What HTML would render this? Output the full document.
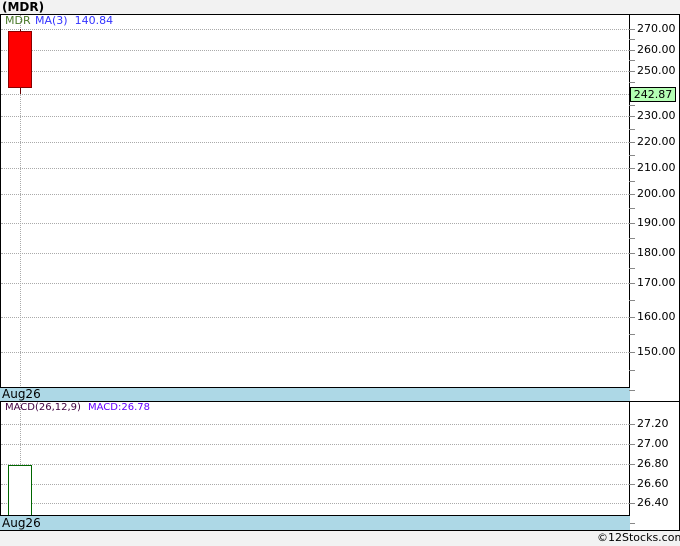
<!DOCTYPE html><html><head><style>
body{margin:0;width:680px;height:546px;background:#f2f2f2;position:relative;overflow:hidden;font-family:"DejaVu Sans","Liberation Sans",sans-serif;}
.a{position:absolute}
.t{font-size:11px;color:#000}
.g{position:absolute;left:1px;width:628px;height:0;border-top:1px dotted #aaa}
.tk{position:absolute;left:629px;width:6px;height:1px;background:#888}
.lb{position:absolute;left:637px;font-size:11px;color:#000}
</style></head><body>
<div class="a" style="left:2px;top:0px;font-weight:bold;font-size:12px">(MDR)</div>
<div class="a" style="left:0;top:14px;width:680px;height:516px;background:#fff;border-top:1px solid #000;box-sizing:border-box"></div>
<div class="a" style="left:0;top:14px;width:1px;height:516px;background:#000"></div>
<div class="a" style="left:629px;top:14px;width:1px;height:516px;background:#000"></div>
<div class="a" style="left:679px;top:14px;width:1px;height:516px;background:#000"></div>
<div class="a" style="left:20px;top:15px;height:501px;border-left:1px dotted #aaa"></div>
<div class="g" style="top:29px"></div><div class="g" style="top:50px"></div><div class="g" style="top:71px"></div><div class="g" style="top:94px"></div><div class="g" style="top:116px"></div><div class="g" style="top:142px"></div><div class="g" style="top:168px"></div><div class="g" style="top:194px"></div><div class="g" style="top:223px"></div><div class="g" style="top:253px"></div><div class="g" style="top:283px"></div><div class="g" style="top:317px"></div><div class="g" style="top:352px"></div>
<div class="tk" style="top:29px"></div><div class="tk" style="top:39px"></div><div class="tk" style="top:50px"></div><div class="tk" style="top:60px"></div><div class="tk" style="top:71px"></div><div class="tk" style="top:82px"></div><div class="tk" style="top:105px"></div><div class="tk" style="top:116px"></div><div class="tk" style="top:129px"></div><div class="tk" style="top:142px"></div><div class="tk" style="top:155px"></div><div class="tk" style="top:168px"></div><div class="tk" style="top:181px"></div><div class="tk" style="top:194px"></div><div class="tk" style="top:208px"></div><div class="tk" style="top:223px"></div><div class="tk" style="top:238px"></div><div class="tk" style="top:253px"></div><div class="tk" style="top:268px"></div><div class="tk" style="top:283px"></div><div class="tk" style="top:300px"></div><div class="tk" style="top:317px"></div><div class="tk" style="top:334px"></div><div class="tk" style="top:352px"></div><div class="tk" style="top:370px"></div>
<div class="lb" style="top:22px">270.00</div><div class="lb" style="top:43px">260.00</div><div class="lb" style="top:64px">250.00</div><div class="lb" style="top:109px">230.00</div><div class="lb" style="top:135px">220.00</div><div class="lb" style="top:161px">210.00</div><div class="lb" style="top:187px">200.00</div><div class="lb" style="top:216px">190.00</div><div class="lb" style="top:246px">180.00</div><div class="lb" style="top:276px">170.00</div><div class="lb" style="top:310px">160.00</div><div class="lb" style="top:345px">150.00</div>
<div class="a" style="left:630px;top:87px;width:46px;height:15px;background:#b3ffb3;border:1px solid #000;box-sizing:border-box;font-size:11px;line-height:13px;text-align:center">242.87</div>
<div class="a t" style="left:5px;top:14px;color:#4a7a2a">MDR</div>
<div class="a t" style="left:35px;top:14px;color:#3333ff">MA(3)&nbsp;&nbsp;140.84</div>
<div class="a" style="left:20px;top:29px;width:1px;height:65px;background:#600"></div>
<div class="a" style="left:8px;top:31px;width:24px;height:57px;background:#f00;border:1px solid #800;box-sizing:border-box"></div>
<div class="a" style="left:0;top:387px;width:630px;height:15px;background:#add8e6;border-top:1px solid #000;border-bottom:1px solid #000;box-sizing:border-box"></div>
<div class="a t" style="left:2px;top:387px;font-size:12px">Aug26</div>
<div class="a" style="left:630px;top:401px;width:50px;height:1px;background:#000"></div>
<div class="tk" style="top:390px"></div>
<div class="g" style="top:424px"></div><div class="g" style="top:444px"></div><div class="g" style="top:464px"></div><div class="g" style="top:484px"></div><div class="g" style="top:503px"></div>
<div class="tk" style="top:424px"></div><div class="tk" style="top:444px"></div><div class="tk" style="top:464px"></div><div class="tk" style="top:484px"></div><div class="tk" style="top:503px"></div><div class="tk" style="top:523px"></div>
<div class="lb" style="top:417px">27.20</div><div class="lb" style="top:437px">27.00</div><div class="lb" style="top:457px">26.80</div><div class="lb" style="top:477px">26.60</div><div class="lb" style="top:496px">26.40</div>
<div class="a t" style="left:5px;top:402px;font-size:10px;color:#400040">MACD(26,12,9)</div>
<div class="a t" style="left:88px;top:402px;font-size:10px;color:#6600ff">MACD:26.78</div>
<div class="a" style="left:8px;top:465px;width:24px;height:52px;background:#fff;border:1px solid #060;box-sizing:border-box"></div>
<div class="a" style="left:0;top:515px;width:630px;height:16px;background:#add8e6;border-top:1px solid #000;border-bottom:1px solid #000;box-sizing:border-box"></div>
<div class="a t" style="left:2px;top:516px;font-size:12px">Aug26</div>
<div class="a" style="left:630px;top:530px;width:50px;height:1px;background:#000"></div>
<div class="a" style="left:0;top:531px;width:680px;height:15px;background:#f2f2f2"></div>
<div class="a" style="left:597px;top:531px;font-size:11px">©12Stocks.com</div>
</body></html>
